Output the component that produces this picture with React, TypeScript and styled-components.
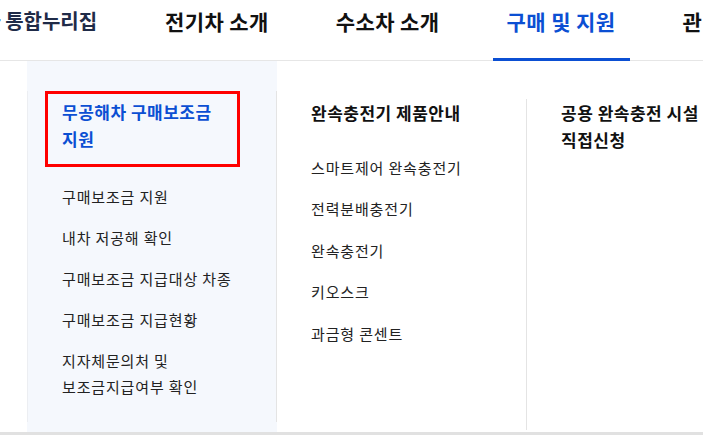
import * as React from 'react';
import styled, { createGlobalStyle } from 'styled-components';

const GlobalStyle = createGlobalStyle`
	html, body {
		margin: 0;
		padding: 0;
		background: #ffffff;
		overflow: hidden;
	}
	body {
		font-family: "Noto Sans CJK KR", "Noto Sans", sans-serif;
		color: #222222;
	}
	ul {
		list-style: none;
		margin: 0;
		padding: 0;
	}
`;

const BLUE = '#0b4fd3';

const Header = styled.header`
	display: flex;
	height: 61px;
	box-shadow: inset 0 -1px 0 #e6e6e6;
	white-space: nowrap;
`;

const Logo = styled.div`
	flex: 0 0 151px;
	overflow: hidden;
	font-size: 20px;
	font-weight: 700;
	line-height: 42px;
	color: #1f2b48;
`;

// the site logo is scrolled partly out of view on the left
const LogoText = styled.span`
	display: inline-block;
	margin-left: -73px;
`;

const Nav = styled.ul`
	display: flex;
	gap: 39px;
`;

const NavItem = styled.li<{ $active?: boolean }>`
	box-sizing: border-box;
	height: 61px;
	padding: 0 14px;
	font-size: 21px;
	font-weight: 700;
	letter-spacing: 0.4px;
	line-height: 42px;
	color: ${props => (props.$active ? BLUE : '#111111')};
	box-shadow: ${props => (props.$active ? `inset 0 -3px 0 ${BLUE}` : 'none')};
`;

const MegaMenu = styled.div`
	display: flex;
	height: 371px;
	padding-left: 27px;
	border-bottom: 3px solid #e1e1e1;
	white-space: nowrap;
`;

const Column = styled.div<{ $tinted?: boolean }>`
	flex: 0 0 250px;
	box-sizing: border-box;
	padding: 20px 0;
	background: ${props => (props.$tinted ? '#f5f8fd' : 'transparent')};
`;

const ColumnInner = styled.div<{ $first?: boolean }>`
	box-sizing: border-box;
	height: 100%;
	padding-left: ${props => (props.$first ? '17px' : '34px')};
	border-left: ${props => (props.$first ? '1px solid #eceef2' : 'none')};
	border-right: 1px solid #e4e4e4;
`;

const FeaturedLink = styled.div`
	box-sizing: border-box;
	width: 195px;
	margin-top: 10px;
	padding: 3.5px 14px 12px;
	border: 3px solid #ff0000;
	font-size: 17px;
	font-weight: 700;
	letter-spacing: 0.5px;
	line-height: 27px;
	color: ${BLUE};
`;

const GroupTitle = styled.div`
	margin-top: 17.5px;
	font-size: 17px;
	font-weight: 700;
	letter-spacing: 0.5px;
	line-height: 27px;
	color: #111111;
`;

const MenuList = styled.ul<{ $offset: number; $inset?: number }>`
	display: flex;
	flex-direction: column;
	gap: 15px;
	margin-top: ${props => props.$offset}px;
	padding-left: ${props => props.$inset || 0}px;
`;

const SubMenuList = styled(MenuList)`
	gap: 15.5px;
`;

const MenuItem = styled.li`
	font-size: 15px;
	letter-spacing: 0.85px;
	line-height: 26px;
	color: #222222;
`;

const navItems = ['전기차 소개', '수소차 소개', '구매 및 지원', '관련 정보'];

const subsidyItems = [
	'구매보조금 지원',
	'내차 저공해 확인',
	'구매보조금 지급대상 차종',
	'구매보조금 지급현황',
];

const chargerItems = ['스마트제어 완속충전기', '전력분배충전기', '완속충전기', '키오스크', '과금형 콘센트'];

export default function App() {
	return (
		<>
			<GlobalStyle />
			<Header>
				<Logo>
					<LogoText>무공해차 통합누리집</LogoText>
				</Logo>
				<Nav>
					{navItems.map(label => (
						<NavItem key={label} $active={label === '구매 및 지원'}>{label}</NavItem>
					))}
				</Nav>
			</Header>
			<MegaMenu>
				<Column $tinted={true}>
					<ColumnInner $first={true}>
						<FeaturedLink>
							무공해차 구매보조금
							<br />
							지원
						</FeaturedLink>
						<MenuList $offset={17} $inset={17}>
							{subsidyItems.map(item => (
								<MenuItem key={item}>{item}</MenuItem>
							))}
							<MenuItem>
								지자체문의처 및
								<br />
								보조금지급여부 확인
							</MenuItem>
						</MenuList>
					</ColumnInner>
				</Column>
				<Column>
					<ColumnInner>
						<GroupTitle>완속충전기 제품안내</GroupTitle>
						<SubMenuList $offset={29}>
							{chargerItems.map(item => (
								<MenuItem key={item}>{item}</MenuItem>
							))}
						</SubMenuList>
					</ColumnInner>
				</Column>
				<Column>
					<ColumnInner>
						<GroupTitle>
							공용 완속충전 시설
							<br />
							직접신청
						</GroupTitle>
					</ColumnInner>
				</Column>
			</MegaMenu>
		</>
	);
}
